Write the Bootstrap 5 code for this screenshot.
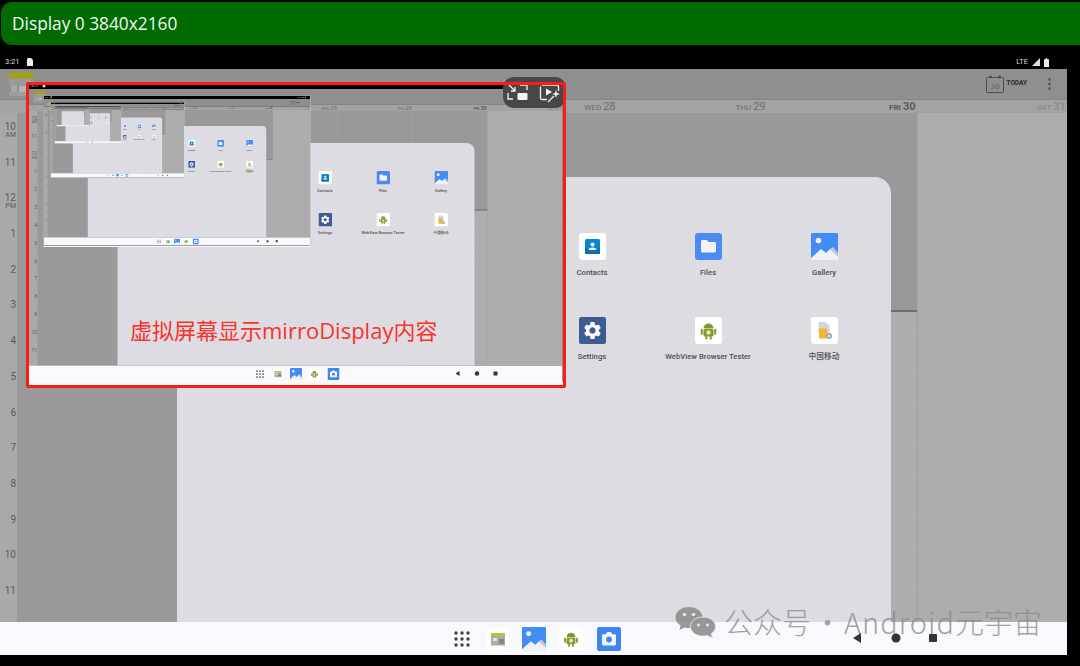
<!DOCTYPE html>
<html lang="zh-CN">
<head>
  <meta charset="UTF-8">
  <meta name="viewport" content="width=device-width, initial-scale=1">
  <title>Display 0</title>
  <link href="https://cdn.jsdelivr.net/npm/bootstrap@5.3.2/dist/css/bootstrap.min.css" rel="stylesheet">
  <style>
    html, body { background: #000; overflow: hidden; }
    body { width: 1080px; height: 666px; font-family: Roboto, "Noto Sans CJK SC", sans-serif; }
    .title-bar {
      height: 43px; margin: 2px 0 10px 1px; padding-left: 11px;
      background: #006b00; color: #f2f7f2;
      border-radius: 11px 0 0 11px;
      font: 17.3px/43px "Open Sans", sans-serif;
    }
    .screen { width: 1067px; height: 600px; background: #000; overflow: hidden; }
    .status-row { height: 14px; padding: 0 18px 0 5px; color: #ddd; font-size: 7.5px; }
    .app-bar { height: 31px; background: #8f8f8f; border-bottom: 1px solid #858585; color: #333; }
    .today-label { font-size: 6.5px; font-weight: 700; margin: 0 21px 0 1px; color: #2c2c2c; }
    .day-row { height: 13px; background: #a3a3a3; padding-left: 17px; }
    .day-name { width: 150px; padding-right: 1.500px; text-align: right; color: #6c6c6c; font-size: 8px; line-height: 13px; }
    .day-name b { font-size: 11px; font-weight: 400; }
    .day-name.is-today, .day-name.is-today b { font-weight: 700; color: #5a5a5a; }
    .day-name.is-sat { color: #858585; }
    .cal-body { height: 509px; background: #adadad; }
    .hours { width: 17px; padding-top: 8px; background: #a9a9a9; color: #5b5b5b; text-align: right; }
    .hour-cell { height: 35.7px; font-size: 10px; line-height: 11px; padding-right: 1px; }
    .hour-cell small { display: block; font-size: 7px; line-height: 7px; }
    .day-col {
      width: 150px;
      background-image: repeating-linear-gradient(#b2b2b2 0 1px, transparent 1px 35.7px);
      background-position: 0 7px;
    }
    .day-col.past { background-color: #999; background-image: none; }
    .day-col.sat-col { border-left: 1px solid #a2a2a2; }
    .past-part { height: 199px; background: #999; border-bottom: 2px solid #6e6e6e; }
    .drawer {
      position: absolute; left: 177px; top: 122px; width: 714px; height: 445px;
      padding: 56px 9px 0 0; background: #dcdce2; border-radius: 16px 16px 0 0;
      display: grid; grid-template-columns: repeat(3, 116px); grid-auto-rows: 84px; justify-content: end;
    }
    .app-cell { text-align: center; color: #505050; font-size: 7.7px; font-weight: 500; line-height: 12px; }
    .app-cell svg { display: block; width: 27px; height: 27px; margin: 0 auto 7px; }
    .task-bar { height: 33px; background: #f8f9fd; position: relative; }
    .task-icons { position: absolute; left: 454px; top: 0; height: 33px; gap: 0; }
    .task-icons svg { display: block; }
    .nav-btns { position: absolute; left: 852px; top: 10px; }
    .mirror-slot { position: absolute; left: 29px; top: 27px; width: 534px; height: 303px; overflow: hidden; background: #f8f9fd; }
    .mirror-slot > .screen { transform: scale(.5); transform-origin: 0 0; }
    .pip-ctl { position: absolute; left: 503px; top: 22px; width: 63px; height: 31px; background: #474747; border-radius: 11px; }
    .red-frame { position: absolute; left: 26px; top: 27px; width: 540px; height: 306px; border: 3px solid #fb1c14; border-radius: 2px; }
    .red-note {
      position: absolute; left: 130px; top: 260px; color: #f9322a; white-space: nowrap;
      font: 22px/30px "Open Sans", "Noto Sans CJK SC", sans-serif;
    }
    .wm-mark { position: absolute; left: 675px; top: 551px; opacity: .88; }
    .wm-text {
      position: absolute; left: 724px; top: 548px; white-space: nowrap; color: #8a8a8a; opacity: .78;
      font: 300 29px/36px "Noto Sans CJK SC", sans-serif;
    }
    .wm-dot { display: inline-block; width: 33px; text-align: center; }
    .wm-latin { letter-spacing: 1px; }
  </style>
</head>
<body>
  <svg width="0" height="0" class="position-absolute">
    <symbol id="i-contacts" viewBox="0 0 27 27">
      <rect width="27" height="27" rx="3" fill="#fff"/>
      <rect x="6" y="6" width="15" height="15" rx="1.5" fill="#0b86cf"/>
      <rect x="6" y="16" width="15" height="5" fill="#0a6fb4"/>
      <circle cx="13.5" cy="11.5" r="2" fill="#fff"/>
      <path d="M9.5 17c.4-2 2-2.6 4-2.6s3.600.6 4 2.600z" fill="#fff"/>
    </symbol>
    <symbol id="i-files" viewBox="0 0 27 27">
      <rect width="27" height="27" rx="3" fill="#4b8bf2"/>
      <path d="M6 8.500c0-.8.600-1.500 1.400-1.500h4.300l2 2h5.800c.8 0 1.500.7 1.500 1.500v7.500c0 .8-.7 1.500-1.500 1.500h-12c-.8 0-1.500-.7-1.500-1.500z" fill="#f3f5fa"/>
    </symbol>
    <symbol id="i-gallery" viewBox="0 0 27 27">
      <path d="M1 0h25a1 1 0 0 1 1 1v25H0V1a1 1 0 0 1 1-1z" fill="#438cf5"/>
      <circle cx="7.500" cy="7.500" r="2.800" fill="#f5f5f8"/>
      <path d="M0 27v-2l10-9 5 4 4-4 8 7v4z" fill="#f1f1f4"/>
      <path d="M19 16l8 7v-3l-5-6z" fill="#c6cad6"/>
    </symbol>
    <symbol id="i-settings" viewBox="0 0 27 27">
      <rect width="27" height="27" rx="2" fill="#3f5b96"/>
      <svg x="3" y="3" width="21" height="21" viewBox="0 0 24 24"><path fill="#fff" d="M19.140 12.940c.04-.3.06-.61.06-.94 0-.32-.02-.64-.07-.94l2.030-1.580a.49.49 0 0 0 .12-.61l-1.920-3.320a.488.488 0 0 0-.59-.22l-2.390.96c-.5-.38-1.030-.7-1.620-.94l-.36-2.540a.484.484 0 0 0-.48-.41h-3.840c-.24 0-.43.17-.47.41l-.36 2.540c-.59.24-1.130.57-1.620.94l-2.390-.96c-.22-.08-.47 0-.59.22L2.740 8.870c-.12.21-.08.47.12.61l2.030 1.580c-.05.3-.09.63-.09.94s.02.64.07.94l-2.030 1.580a.49.49 0 0 0-.12.61l1.920 3.320c.12.22.37.29.59.22l2.390-.96c.5.38 1.030.7 1.620.94l.36 2.540c.05.24.24.41.48.41h3.840c.24 0 .44-.17.47-.41l.36-2.540c.59-.24 1.130-.56 1.620-.94l2.390.96c.22.08.47 0 .59-.22l1.920-3.320c.12-.22.07-.47-.12-.61l-2.010-1.580zM12 15.600c-1.980 0-3.600-1.620-3.600-3.600s1.620-3.600 3.600-3.600 3.600 1.620 3.600 3.600-1.620 3.600-3.600 3.600z"/></svg>
    </symbol>
    <symbol id="i-android" viewBox="0 0 27 27">
      <rect width="27" height="27" rx="3" fill="#fff"/>
      <path d="M8.500 11.500a5 5 0 0 1 10 0z" fill="#7d9a2b"/>
      <rect x="8.500" y="12" width="10" height="7.500" rx="1.500" fill="#7d9a2b"/>
      <rect x="5.800" y="11.800" width="2" height="6" rx="1" fill="#7d9a2b"/>
      <rect x="19.200" y="11.800" width="2" height="6" rx="1" fill="#7d9a2b"/>
      <rect x="10.300" y="19" width="2" height="3.500" rx="1" fill="#7d9a2b"/>
      <rect x="14.700" y="19" width="2" height="3.500" rx="1" fill="#7d9a2b"/>
      <circle cx="13.500" cy="15.500" r="2.200" fill="#e5e8c8"/>
    </symbol>
    <symbol id="i-mobile" viewBox="0 0 27 27">
      <rect width="27" height="27" rx="3" fill="#fff"/>
      <path d="M7.500 5h7l4 4v7H7.500z" fill="#cfd5dc"/>
      <rect x="8" y="11.500" width="8" height="10" rx=".8" fill="#f7b32b"/>
      <circle cx="18" cy="19" r="3" fill="#9aa9b8"/>
      <circle cx="18" cy="19" r="1.100" fill="#fff"/>
    </symbol>
    <symbol id="i-thumb" viewBox="0 0 22 22">
      <rect width="22" height="22" rx="3" fill="#fff"/>
      <rect x="4" y="5" width="14" height="3" fill="#b9c23c"/>
      <rect x="4" y="8" width="14" height="9.500" fill="#a8aea0"/>
      <rect x="6" y="10" width="4" height="3" fill="#e3e6df"/>
      <rect x="12" y="11" width="5" height="5" fill="#7e8a78"/>
    </symbol>
    <symbol id="i-camera" viewBox="0 0 24 24">
      <rect width="24" height="24" rx="2" fill="#3f87ee"/>
      <path d="M5 8.500c0-.8.600-1.300 1.300-1.300h2.500L10.200 5h3.600l1.400 2.200h2.500c.7 0 1.300.5 1.300 1.300v8.600c0 .8-.6 1.300-1.300 1.300H6.300c-.7 0-1.300-.5-1.300-1.300z" fill="#f3f6fb"/>
      <circle cx="12" cy="12.500" r="2.900" fill="#3f87ee"/>
    </symbol>
  </svg>

  <div class="title-bar">Display 0 3840x2160</div>

  <div class="position-relative">
    <div class="screen d-flex flex-column" id="deviceScreen">
      <div class="status-row d-flex align-items-center">
        <span>3:21</span>
        <svg class="ms-2" width="6" height="8" viewBox="0 0 6 8"><path d="M1 0h3l2 2v6H0V1z" fill="#eee"/></svg>
        <span class="ms-auto">LTE</span>
        <svg class="ms-1" width="8" height="8" viewBox="0 0 8 8"><path d="M0 8l8-8v8z" fill="#ddd"/></svg>
        <svg class="ms-1" width="5" height="9" viewBox="0 0 5 9"><path d="M1 1h1V0h1v1h1a1 1 0 0 1 1 1v7H0V2a1 1 0 0 1 1-1z" fill="#eee"/></svg>
      </div>

      <div class="app-bar d-flex align-items-center flex-shrink-0">
        <svg class="ms-2" width="26" height="24" viewBox="0 0 26 24">
          <rect x="1" y="1" width="24" height="5" fill="#a2a400"/>
          <rect x="1" y="7" width="24" height="7" fill="#9a9a9a"/>
          <rect x="3" y="14" width="6" height="6" fill="#a9a9a9"/>
          <rect x="11" y="14" width="7" height="6" fill="#b4b4b4"/>
          <rect x="1" y="20" width="20" height="4" fill="#9d9d9d"/>
        </svg>
        <svg class="ms-auto" width="19" height="18" viewBox="0 0 19 18" fill="none" stroke="#4d4d4d">
          <rect x=".5" y="2.500" width="17" height="15" rx="1"/>
          <circle cx="4.500" cy="2" r="1" fill="#4d4d4d"/>
          <circle cx="13.500" cy="2" r="1" fill="#4d4d4d"/>
          <text x="9" y="13.500" text-anchor="middle" font-size="8" fill="#666" stroke="none" font-family="Roboto">30</text>
        </svg>
        <span class="today-label">TODAY</span>
        <svg class="me-3" width="3" height="12" viewBox="0 0 3 12" fill="#4f4f4f"><circle cx="1.500" cy="1.500" r="1.300"/><circle cx="1.500" cy="6" r="1.300"/><circle cx="1.500" cy="10.500" r="1.300"/></svg>
      </div>

      <!-- first three days always sit under the mirror, so those cells stay empty -->
      <div class="day-row d-flex flex-shrink-0">
        <div class="day-name"></div>
        <div class="day-name"></div>
        <div class="day-name"></div>
        <div class="day-name">WED <b>28</b></div>
        <div class="day-name">THU <b>29</b></div>
        <div class="day-name is-today">FRI <b>30</b></div>
        <div class="day-name is-sat">SAT <b>31</b></div>
      </div>

      <div class="cal-body d-flex flex-shrink-0">
        <div class="hours">
          <div class="hour-cell">10<small>AM</small></div>
          <div class="hour-cell">11</div>
          <div class="hour-cell">12<small>PM</small></div>
          <div class="hour-cell">1</div>
          <div class="hour-cell">2</div>
          <div class="hour-cell">3</div>
          <div class="hour-cell">4</div>
          <div class="hour-cell">5</div>
          <div class="hour-cell">6</div>
          <div class="hour-cell">7</div>
          <div class="hour-cell">8</div>
          <div class="hour-cell">9</div>
          <div class="hour-cell">10</div>
          <div class="hour-cell">11</div>
        </div>
        <div class="day-col past"></div>
        <div class="day-col past"></div>
        <div class="day-col past"></div>
        <div class="day-col past"></div>
        <div class="day-col past"></div>
        <div class="day-col"><div class="past-part"></div></div>
        <div class="day-col sat-col"></div>
      </div>

      <div class="task-bar flex-shrink-0">
        <div class="task-icons d-flex align-items-center">
          <svg width="16" height="16" viewBox="0 0 16 16" fill="#3f3f46">
            <circle cx="2" cy="2" r="1.700"/><circle cx="8" cy="2" r="1.700"/><circle cx="14" cy="2" r="1.700"/>
            <circle cx="2" cy="8" r="1.700"/><circle cx="8" cy="8" r="1.700"/><circle cx="14" cy="8" r="1.700"/>
            <circle cx="2" cy="14" r="1.700"/><circle cx="8" cy="14" r="1.700"/><circle cx="14" cy="14" r="1.700"/>
          </svg>
          <svg style="margin-left:17px" width="22" height="22"><use href="#i-thumb"/></svg>
          <svg style="margin-left:13px" width="24" height="24"><use href="#i-gallery"/></svg>
          <svg style="margin-left:13px" width="24" height="24"><use href="#i-android"/></svg>
          <svg style="margin-left:14px" width="24" height="24"><use href="#i-camera"/></svg>
        </div>
        <svg class="nav-btns" width="87" height="12" viewBox="0 0 87 12" fill="#33333a">
          <path d="M1 6l8-5v10z"/>
          <circle cx="44" cy="6" r="4.500"/>
          <rect x="77" y="2" width="8" height="8" rx="1"/>
        </svg>
      </div>

      <div class="drawer">
        <div class="app-cell"><svg><use href="#i-contacts"/></svg>Contacts</div>
        <div class="app-cell"><svg><use href="#i-files"/></svg>Files</div>
        <div class="app-cell"><svg><use href="#i-gallery"/></svg>Gallery</div>
        <div class="app-cell"><svg><use href="#i-settings"/></svg>Settings</div>
        <div class="app-cell"><svg><use href="#i-android"/></svg>WebView Browser Tester</div>
        <div class="app-cell"><svg><use href="#i-mobile"/></svg>中国移动</div>
      </div>

      <div class="mirror-slot"></div>
    </div>

    <div class="pip-ctl">
      <svg class="position-absolute top-0 start-0" width="63" height="31" viewBox="0 0 63 31" fill="none" stroke="#f4f4f4" stroke-width="1.300">
        <path d="M17 8h7v5M5 16v6h5"/>
        <path d="M6 8l6 6M12 10v4H8"/>
        <rect x="14.500" y="16" width="10" height="7" rx="1" fill="#f4f4f4" stroke="none"/>
        <path d="M39 8h15a1.500 1.500 0 0 1 1.500 1.500V14M37.500 9.500V21a1.500 1.500 0 0 0 1.500 1.500h5"/>
        <path d="M43 11.500l6 3.500-6 3.500z" fill="#f4f4f4" stroke="none"/>
        <path d="M53 13l1 3 3 1-3 1-1 3-1-3-3-1 3-1z" fill="#f4f4f4" stroke="none"/>
        <path d="M51 19l-6 6"/>
      </svg>
    </div>
    <div class="red-frame"></div>
    <div class="red-note">虚拟屏幕显示mirroDisplay内容</div>

    <svg class="wm-mark" width="41" height="33" viewBox="0 0 41 33">
      <path d="M14 1c7.500 0 13.500 4.500 13.500 10.500S21.500 22 14 22c-1.500 0-3-.2-4.300-.6L4.500 24l1-4.500C2.200 17.500.500 14.700.500 11.500.500 5.500 6.500 1 14 1z" fill="#8c8c8c"/>
      <path d="M28 11c7 0 12.500 4 12.500 9.500 0 3-1.600 5.600-4.200 7.300l1 4.200-5-2.400c-1.300.3-2.800.5-4.300.5-7 0-12.500-4-12.500-9.600S21 11 28 11z" fill="#8c8c8c" stroke="#e4e4e8" stroke-width="1"/>
      <circle cx="9.500" cy="8.500" r="1.800" fill="#e4e4e8"/><circle cx="18.500" cy="8.500" r="1.800" fill="#e4e4e8"/>
      <circle cx="23.500" cy="19" r="1.500" fill="#e4e4e8"/><circle cx="32.500" cy="19" r="1.500" fill="#e4e4e8"/>
    </svg>
    <div class="wm-text">公众号<span class="wm-dot">·</span><span class="wm-latin">Android</span>元宇宙</div>
  </div>

  <script src="https://cdn.jsdelivr.net/npm/bootstrap@5.3.2/dist/js/bootstrap.bundle.min.js"></script>
  <script>
    // the virtual display shows itself, so nest the same screen a few levels deep
    const screenEl = document.getElementById('deviceScreen');
    const blank = screenEl.cloneNode(true);
    blank.removeAttribute('id');
    let slot = screenEl.querySelector('.mirror-slot');
    for (let i = 0; i < 5; i++) {
      const copy = blank.cloneNode(true);
      // from level 4 on the labels are under a pixel tall, nothing left to read
      if (i >= 3) {
        const walker = document.createTreeWalker(copy, NodeFilter.SHOW_TEXT);
        while (walker.nextNode()) walker.currentNode.nodeValue = '';
      }
      slot.appendChild(copy);
      slot = copy.querySelector('.mirror-slot');
    }
    slot.remove();
  </script>
</body>
</html>
